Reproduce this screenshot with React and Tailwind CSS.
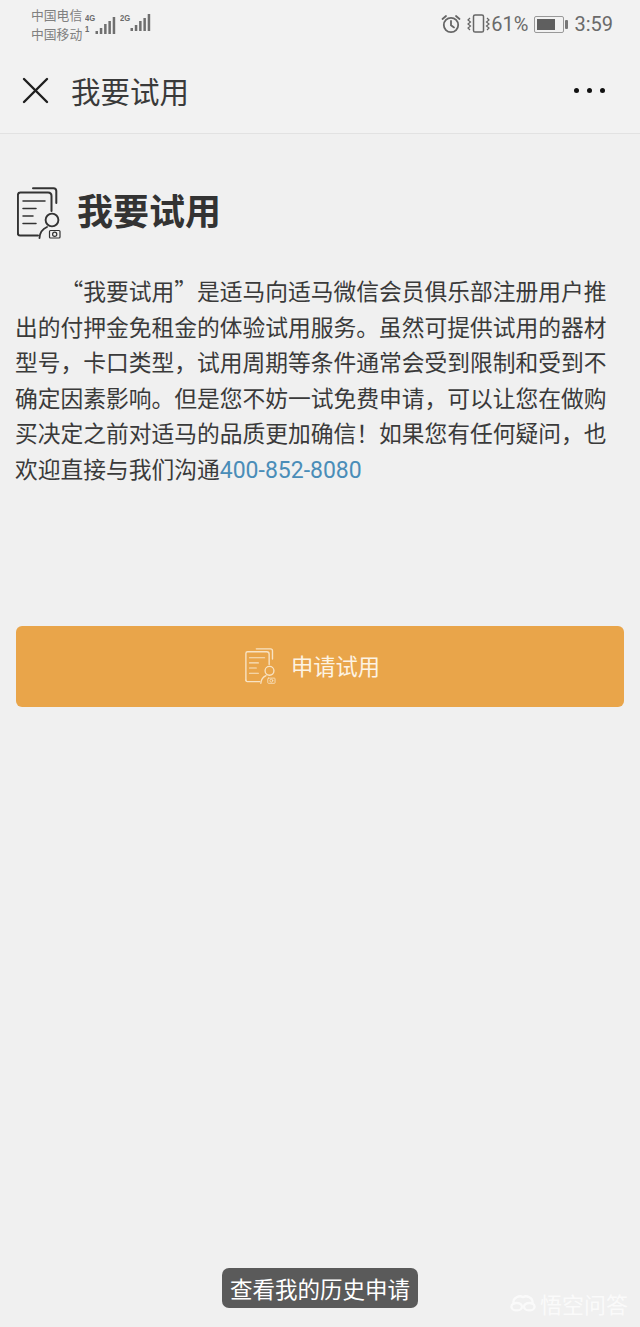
const FONT = '"Noto Sans CJK SC","Noto Sans",sans-serif';

function TrialIcon({ className, color }) {
  return (
    <svg viewBox="0 0 44 52" className={className} fill="none" stroke={color} strokeWidth="1.5" strokeLinecap="round" strokeLinejoin="round">
      <path d="M0.9 46.5 Q0.9 48.5 3 48.5 H21" strokeWidth="2" />
      <path d="M0.9 46.5 V8 Q0.9 5.5 3.4 5.5 H31 Q34.5 5.5 34.5 9 V24" strokeWidth="2" />
      <path d="M16 1.2 H36.5 Q39.3 1.2 39.3 4 V16" strokeWidth="2" />
      <path d="M6 14 H28" />
      <path d="M6 21.5 H19" />
      <path d="M6 29 H16" />
      <path d="M6 36.5 H19" />
      <circle cx="35" cy="33" r="6.4" strokeWidth="1.9" />
      <path d="M22.5 51 Q23 43 30 40" strokeWidth="1.9" />
      <rect x="32.5" y="43.5" width="10.5" height="7.5" rx="1" strokeWidth="1.2" />
      <circle cx="37.7" cy="47.2" r="2.1" strokeWidth="1.2" />
    </svg>
  );
}

function Signal({ bars }) {
  return (
    <svg width="22" height="19" viewBox="0 0 22 19" fill="#6f6f6f">
      {bars.map((h, i) => (
        <rect key={i} x={i * 4.3 + 0.5} y={18 - h} width="2.5" height={h} />
      ))}
    </svg>
  );
}

const NARROW = { fontFamily: '"Liberation Sans",sans-serif' };

function StatusBar() {
  return (
    <div className="flex h-[48px] items-start justify-between pl-[31px] pr-[27px] text-[#6a6a6a]">
      <div className="flex items-start pt-[6px]">
        <div className="flex flex-col text-[12.8px] leading-[18.5px] text-[#808080]">
          <span>中国电信</span>
          <span>中国移动</span>
        </div>
        <div className="ml-[3px] mt-[7px] flex items-end">
          <div className="flex w-[10px] origin-left flex-col text-[9px] font-bold leading-[11px] [transform:scaleX(0.85)]" style={NARROW}>
            <span>4G</span>
            <span>1</span>
          </div>
          <Signal bars={[3, 6, 10, 13, 17]} />
        </div>
        <div className="ml-[3px] mt-[7px] flex items-end">
          <div className="flex w-[10px] origin-left flex-col self-start text-[9px] font-bold leading-[11px] [transform:scaleX(0.85)]" style={NARROW}>
            <span>2G</span>
          </div>
          <Signal bars={[3, 6, 10, 13, 17]} />
        </div>
      </div>
      <div className="flex items-center pt-[14px]">
        <svg width="20" height="20" viewBox="0 0 20 20" fill="none" stroke="#666" strokeWidth="1.8" strokeLinecap="round">
          <circle cx="10" cy="11" r="7.2" />
          <path d="M10 7 V11.2 L13 13.4" />
          <path d="M1.5 5 L5 2" />
          <path d="M18.5 5 L15 2" />
        </svg>
        <svg width="24" height="20" viewBox="0 0 24 20" fill="none" stroke="#666" strokeWidth="1.5" className="ml-[5px]">
          <rect x="7.5" y="1" width="10" height="17" rx="1.6" />
          <path d="M4 4 L2 6 L4.5 8 L2 10 L4.5 12 L2 14 L4 16" strokeWidth="1.2" />
          <path d="M21 4 L23 6 L20.5 8 L23 10 L20.5 12 L23 14 L21 16" strokeWidth="1.2" />
        </svg>
        <span className="ml-[1px] text-[20px] leading-[20px]" style={{ fontFamily: 'Roboto,sans-serif' }}>61%</span>
        <div className="ml-[6px] flex items-center">
          <div className="flex h-[17px] w-[30px] items-center rounded-[2px] border border-[#999] p-[2px]">
            <div className="h-full w-[18px] bg-[#5f5f5f]" />
          </div>
          <div className="ml-[1px] h-[9px] w-[3px] rounded-[1px] bg-[#777]" />
        </div>
        <span className="ml-[6px] text-[20px] leading-[20px]" style={{ fontFamily: 'Roboto,sans-serif' }}>3:59</span>
      </div>
    </div>
  );
}

function Header() {
  return (
    <div className="flex h-[86px] items-center justify-between border-b border-[#e2e2e2] bg-[#f2f2f2] pl-[22px] pr-[35px]">
      <div className="flex items-center">
        <svg width="27" height="27" viewBox="0 0 27 27" stroke="#1f1f1f" strokeWidth="2.4" strokeLinecap="round">
          <path d="M2 2 L25 25" />
          <path d="M25 2 L2 25" />
        </svg>
        <span className="mb-[1px] ml-[22px] text-[29.5px] leading-[40px] text-[#3a3a3a]">我要试用</span>
      </div>
      <div className="flex gap-[8px]">
        <span className="h-[5px] w-[5px] rounded-full bg-[#111]" />
        <span className="h-[5px] w-[5px] rounded-full bg-[#111]" />
        <span className="h-[5px] w-[5px] rounded-full bg-[#111]" />
      </div>
    </div>
  );
}

export default function App() {
  return (
    <div className="relative flex h-[1327px] w-[640px] flex-col overflow-hidden bg-[#f0f0f0]" style={{ fontFamily: FONT }}>
      <div className="bg-[#f2f2f2]">
        <StatusBar />
        <Header />
      </div>
      <div className="ml-[17px] mt-[51px] flex items-center">
        <TrialIcon className="h-[52px] w-[44px]" color="#333" />
        <h1 className="mb-[8px] ml-[16px] text-[36px] font-bold leading-[48px] text-[#333]">我要试用</h1>
      </div>
      <p className="mx-[15px] mt-[32px] text-[22.75px] leading-[35.6px] text-[#3a3a3a]" style={{ textIndent: '45.5px' }}>
        “我要试用”是适马向适马微信会员俱乐部注册用户推出的付押金免租金的体验试用服务。虽然可提供试用的器材型号，卡口类型，试用周期等条件通常会受到限制和受到不确定因素影响。但是您不妨一试免费申请，可以让您在做购买决定之前对适马的品质更加确信！如果您有任何疑问，也欢迎直接与我们沟通<span className="text-[23px] leading-none text-[#4a8db8]" style={{ fontFamily: 'Roboto,sans-serif' }}>400-852-8080</span>
      </p>
      <button className="mx-[16px] mt-[139px] flex h-[81px] items-center justify-center rounded-[6px] bg-[#e9a54a] pr-[15px] text-[22.3px] text-[#fdf3e3]">
        <TrialIcon className="mr-[15px] h-[36px] w-[31px]" color="#f8e3c4" />
        申请试用
      </button>
      <div className="mb-[19px] mt-auto flex justify-center">
        <span className="rounded-[7px] bg-[#5a5a5a] px-[8px] py-[1px] text-[22.5px] leading-[38px] text-white">查看我的历史申请</span>
      </div>
      <div className="absolute bottom-[9px] right-[12px] flex items-center text-[22px] leading-[30px] text-white opacity-70">
        <svg width="28" height="19" viewBox="0 0 26 18" fill="none" stroke="#fff" strokeWidth="2.2" className="mr-[3px]">
          <path d="M4 9 C3 3 10 1 13 3 C16 1 23 3 22 9" />
          <ellipse cx="7" cy="12" rx="5" ry="3.5" />
          <ellipse cx="19" cy="12" rx="5" ry="3.5" />
        </svg>
        悟空问答
      </div>
    </div>
  );
}
